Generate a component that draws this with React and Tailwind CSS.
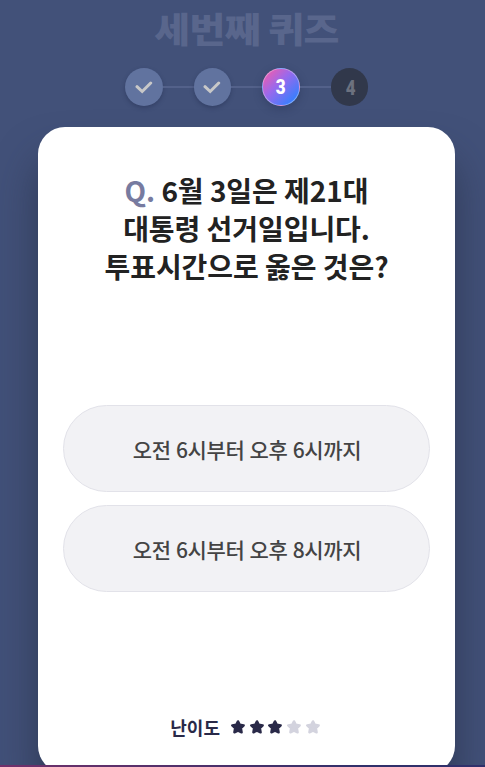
const steps = [
  { n: 1, state: 'done' },
  { n: 2, state: 'done' },
  { n: 3, state: 'active' },
  { n: 4, state: 'todo' },
];

const look = {
  done: 'bg-[#61739f] shadow-[0_2px_4px_rgba(30,40,75,0.4)]',
  active:
    'border border-white/35 bg-[linear-gradient(135deg,#f35bab_5%,#9a69ec_42%,#347fff_88%)] pl-px text-white shadow-[0_3px_8px_rgba(30,40,75,0.35)]',
  todo: 'bg-[#31384b] pl-[3px] pt-0.5 text-[#6c717f]',
};

function Check() {
  return (
    <svg viewBox="0 0 18 14" className="h-[14px] w-[18px]" fill="none" stroke="#c8c8c8" strokeWidth="3" strokeLinecap="round" strokeLinejoin="miter">
      <path d="M2 6.7 L7.2 11.5 L15.7 3" />
    </svg>
  );
}

function Star({ on }) {
  return (
    <svg viewBox="0 0 14 14" className={`h-[14px] w-[14px] ${on ? 'text-[#292948]' : 'text-[#d3d3de]'}`} fill="currentColor" stroke="currentColor" strokeWidth="2.4" strokeLinejoin="round">
      <path d="M7 1.4 L8.8 4.8 L12.7 5.4 L9.9 8.2 L10.6 12.3 L7 10.6 L3.4 12.3 L4.1 8.2 L1.3 5.4 L5.2 4.8 Z" />
    </svg>
  );
}

function Answer({ children }) {
  return (
    <button className="flex h-[87px] w-full items-center justify-center rounded-full border border-[#e2e2e9] bg-[#f2f2f5] pt-0.5 pl-px text-[21px] font-medium tracking-[-0.35px] [word-spacing:0.8px] whitespace-nowrap text-[#444]">
      {children}
    </button>
  );
}

export default function App() {
  return (
    <div className="h-[767px] w-full overflow-hidden bg-[linear-gradient(90deg,#71306b,#30306b_75%)] font-['Noto_Sans_CJK_KR',sans-serif]">
      <div className="flex h-[765px] flex-col overflow-hidden bg-[#425179]">
        <h1 className="flex h-[68px] shrink-0 origin-[50%_12px] scale-y-90 items-start justify-center pl-2 text-[39px] leading-[58px] font-black tracking-[-0.6px] whitespace-nowrap text-[#59668c]">
          세번째 퀴즈
        </h1>
        <div className="ml-[125px] flex h-[38px] shrink-0 items-center">
          {steps.map(({ n, state }) => (
            <div key={n} className="flex items-center">
              {n > 1 && <div className="h-0.5 w-[31px] bg-[#53618a]" />}
              <div className={`flex h-[38px] w-[37.5px] items-center justify-center rounded-full font-['Roboto',sans-serif] text-[20px] font-black ${look[state]}`}>
                {state === 'done' ? <Check /> : <span className="scale-x-85">{n}</span>}
              </div>
            </div>
          ))}
        </div>
        <main className="mt-[21px] ml-[38px] flex h-[646px] w-[417px] shrink-0 flex-col rounded-[27px] bg-white px-[25px] shadow-[0_32px_42px_rgba(35,42,62,0.6)]">
          <h2 className="mt-[44px] h-[234px] text-center text-[28px] leading-[38px] font-bold tracking-[-0.05px] whitespace-nowrap text-[#222]">
            <span className="text-[#777ba0]">Q.</span> 6월 3일은 제21대
            <br />
            대통령 선거일입니다.
            <br />
            투표시간으로 옳은 것은?
          </h2>
          <div className="flex flex-col gap-[13px]">
            <Answer>오전 6시부터 오후 6시까지</Answer>
            <Answer>오전 6시부터 오후 8시까지</Answer>
          </div>
          <div className="mt-[121px] flex h-[28px] items-center justify-center gap-[11px] pr-[3px]">
            <span className="text-[18px] font-bold text-[#292948]">난이도</span>
            <div className="flex gap-[4.7px]">
              {[1, 2, 3, 4, 5].map((n) => (
                <Star key={n} on={n <= 3} />
              ))}
            </div>
          </div>
        </main>
      </div>
    </div>
  );
}
